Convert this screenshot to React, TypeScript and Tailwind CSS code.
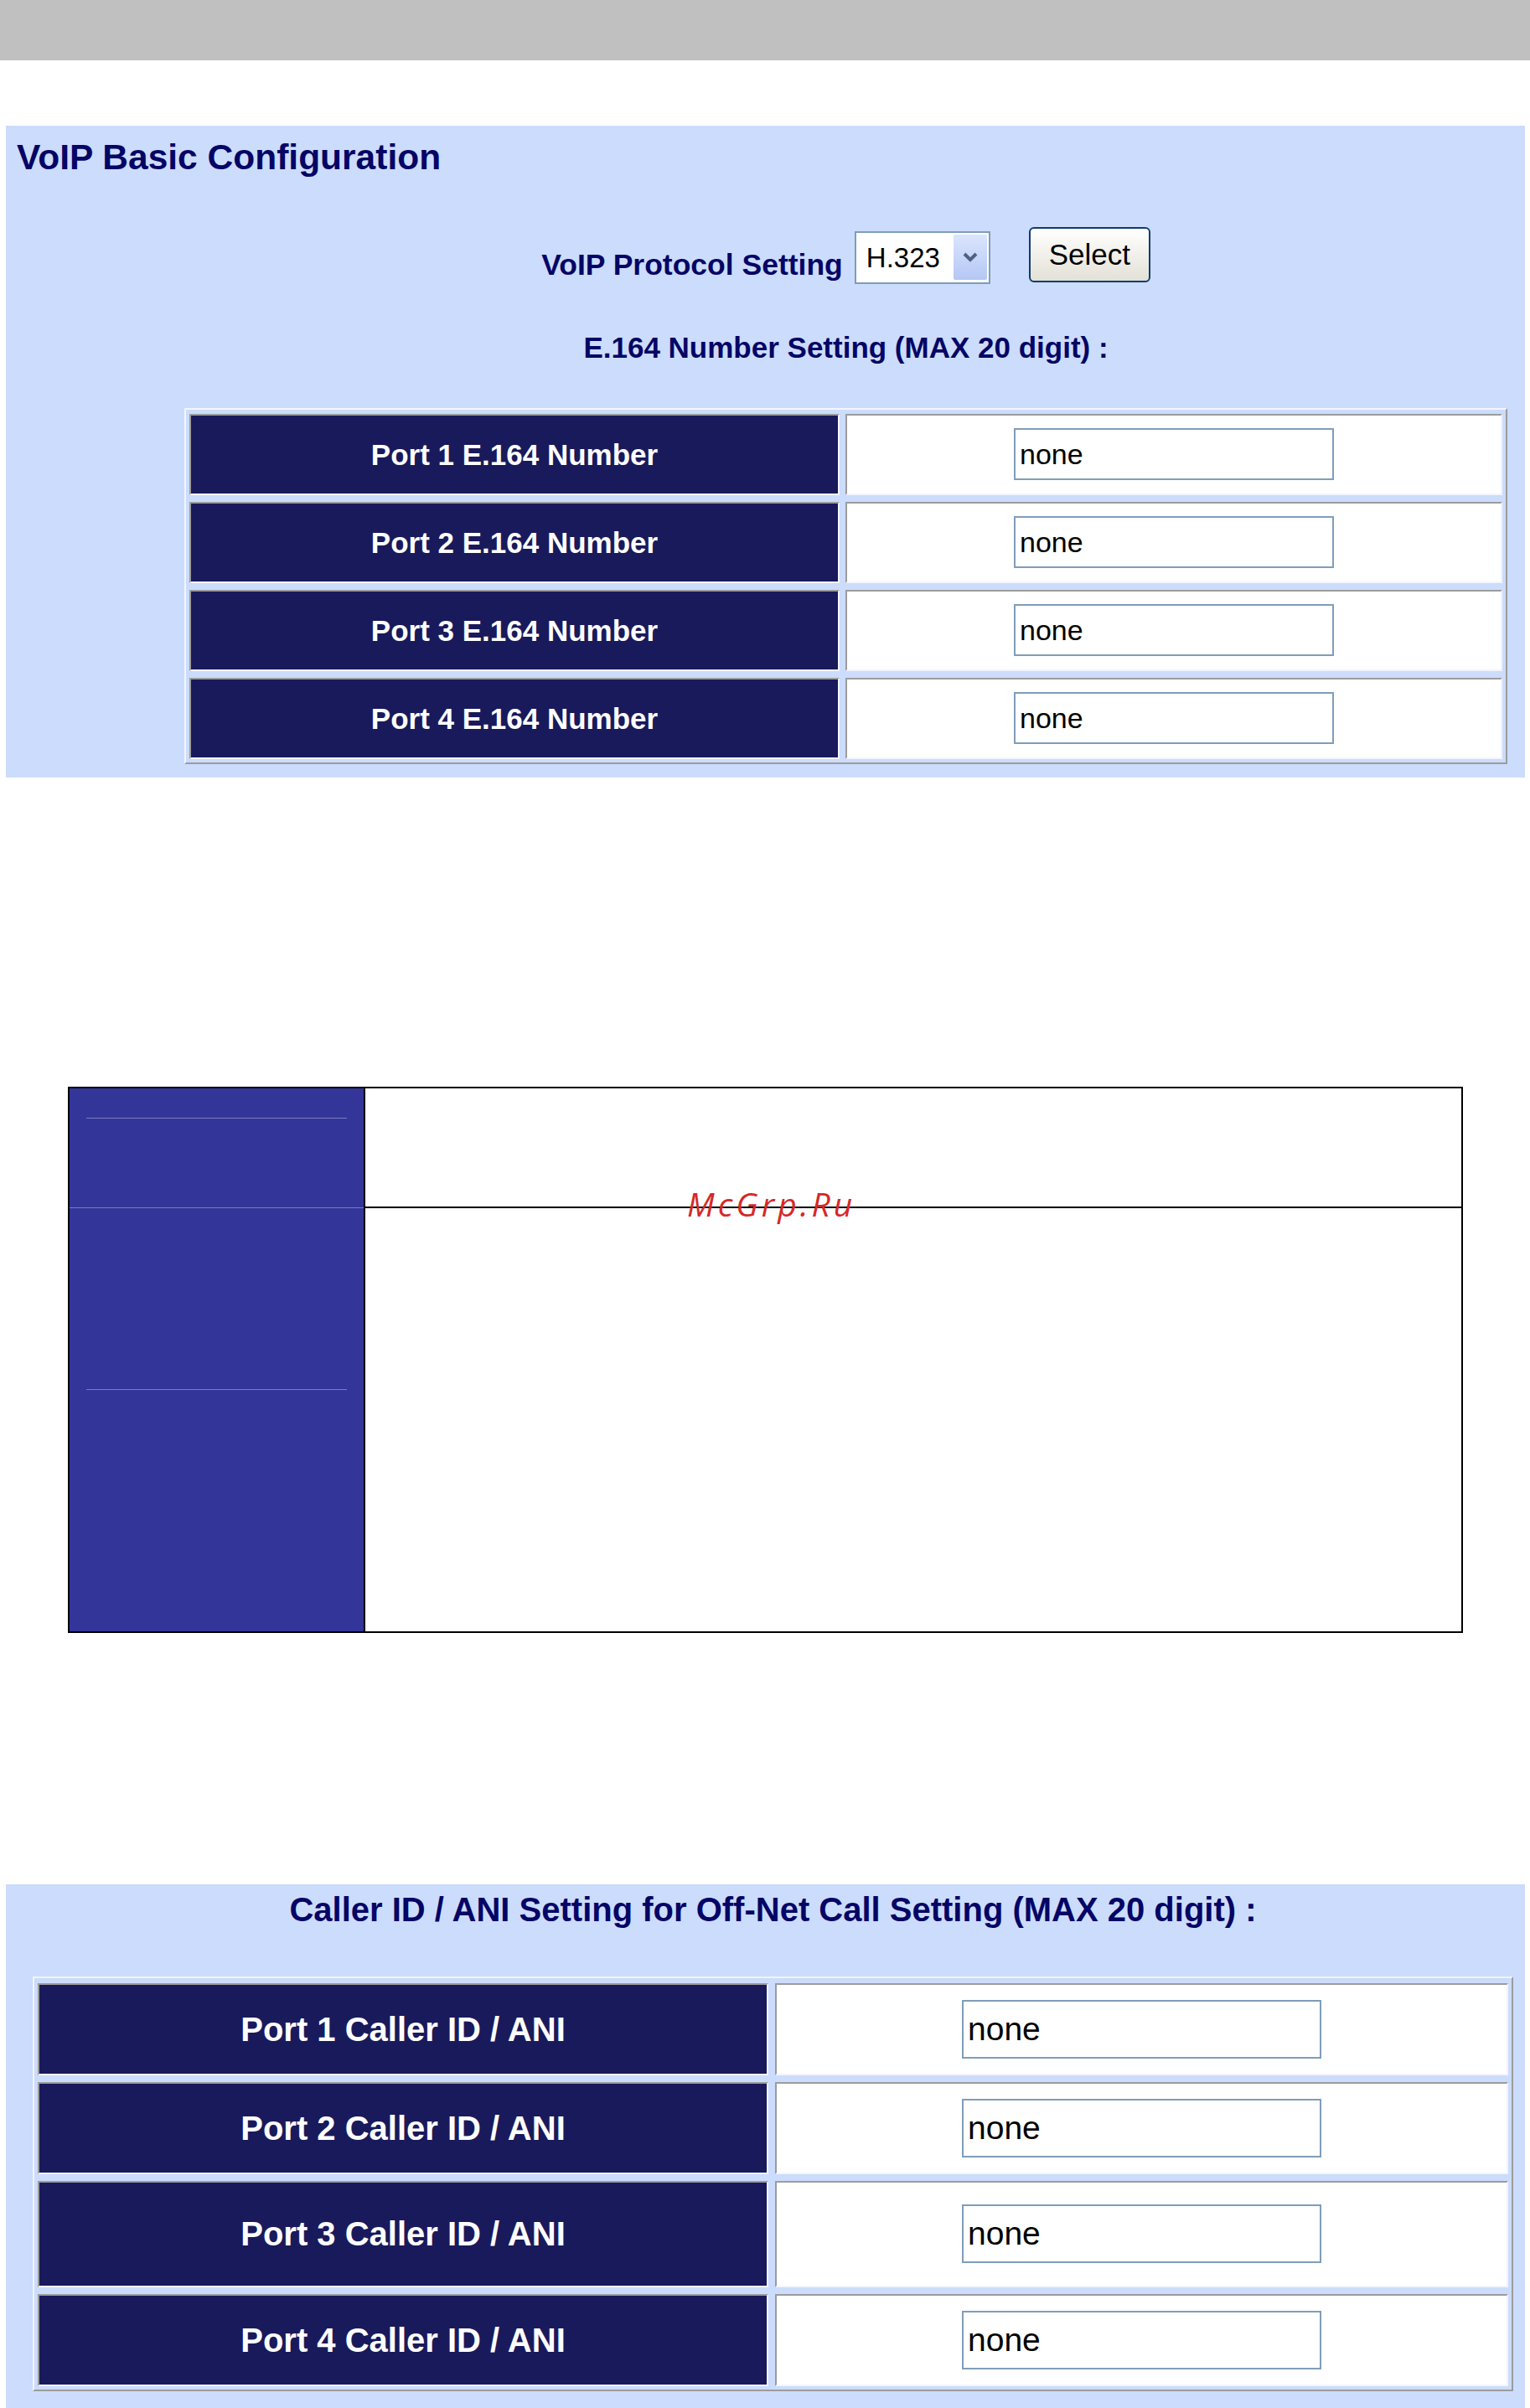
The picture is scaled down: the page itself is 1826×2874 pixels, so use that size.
import React from "react";

const e164Rows = ["Port 1 E.164 Number", "Port 2 E.164 Number", "Port 3 E.164 Number", "Port 4 E.164 Number"];
const callerRows = ["Port 1 Caller ID / ANI", "Port 2 Caller ID / ANI", "Port 3 Caller ID / ANI", "Port 4 Caller ID / ANI"];

function Cell({ children, dark }: { children: React.ReactNode; dark?: boolean }) {
  return (
    <div
      className={
        "flex items-center justify-center border-2 border-t-[#9c9c9c] border-l-[#9c9c9c] border-b-[#f2f5fd] border-r-[#f2f5fd] " +
        (dark ? "bg-[#191a5b] text-white font-bold" : "bg-white")
      }
    >
      {children}
    </div>
  );
}

function NoneInput({ big }: { big?: boolean }) {
  return (
    <input
      readOnly
      value="none"
      className={
        "border-2 border-[#7f9db9] bg-white text-black outline-none px-[5px] " +
        (big ? "w-[429px] h-[70px] text-[39px]" : "w-[382px] h-[62px] text-[34px]")
      }
    />
  );
}

export default function App() {
  return (
    <div className="w-[1826px] h-[2874px] overflow-hidden bg-white font-['Liberation_Sans',Arial,sans-serif]">
      <div className="h-[72px] bg-[#c0c0c0]" />

      {/* VoIP basic configuration panel */}
      <section className="mt-[78px] ml-[7px] w-[1813px] bg-[#ccdcfc] pt-[17px] pb-[16px]">
        <h1 className="pl-[13px] text-[42.5px] leading-none font-bold text-[#050566]">VoIP Basic Configuration</h1>
        <div className="ml-[213px] w-[1579px]">
          <div className="mt-[61px] flex items-start justify-center">
            <span className="mt-[28px] text-[35.5px] leading-none font-bold text-[#050566]">VoIP Protocol Setting</span>
            <div className="ml-[14px] mt-[5px] w-[162px] h-[63px] border-2 border-[#7f9db9] bg-white flex items-center">
              <span className="flex-1 pl-[12px] text-[33px] leading-none text-black">H.323</span>
              <div className="mr-[2px] w-[40px] h-[54px] rounded-[2px] bg-linear-to-b from-[#dbe5fd] to-[#b4c7f4] flex items-center justify-center">
                <svg width="20" height="14" viewBox="0 0 20 14">
                  <path d="M3 3 L10 10 L17 3" fill="none" stroke="#4d6185" strokeWidth="4" />
                </svg>
              </div>
            </div>
            <button className="ml-[46px] w-[145px] h-[66px] rounded-[6px] border-2 border-[#0f3c6c] bg-linear-to-b from-white to-[#e3e1d6] text-[35px] leading-none text-black flex items-center justify-center">
              Select
            </button>
          </div>
          <p className="mt-[58px] text-center text-[35px] leading-none font-bold text-[#050566]">
            E.164 Number Setting (MAX 20 digit) :
          </p>
          <div className="mt-[55px] border-2 border-t-[#f2f5fd] border-l-[#f2f5fd] border-b-[#9c9c9c] border-r-[#9c9c9c] px-[4px] pt-[5px] pb-[4px] grid grid-cols-[776px_784px] auto-rows-[97px] gap-x-[7px] gap-y-[8px]">
            {e164Rows.map((r) => (
              <React.Fragment key={r}>
                <Cell dark>
                  <span className="text-[35px] leading-none">{r}</span>
                </Cell>
                <Cell>
                  <NoneInput />
                </Cell>
              </React.Fragment>
            ))}
          </div>
        </div>
      </section>

      {/* empty two-row table */}
      <div className="relative mt-[369px] ml-[81px] w-[1665px] h-[652px] border-2 border-black flex">
        <div className="w-[353px] bg-[#343598] border-r-2 border-black flex flex-col">
          <div className="h-[143px] border-b border-[#7b7cc4] pt-[35px]">
            <div className="mx-[20px] h-px bg-[#7b7cc4]" />
          </div>
          <div className="pt-[216px]">
            <div className="mx-[20px] h-px bg-[#7b7cc4]" />
          </div>
        </div>
        <div className="flex-1 flex flex-col">
          <div className="h-[143px] border-b-2 border-black" />
          <div className="flex-1" />
        </div>
        <span className="absolute left-[737px] top-[118px] font-['Open_Sans','Noto_Sans',sans-serif] italic font-medium text-[39px] leading-none tracking-[4px] text-[#d62828]">
          McGrp.Ru
        </span>
      </div>

      {/* Caller ID panel */}
      <section className="mt-[300px] ml-[7px] w-[1813px] h-[625px] bg-[#ccdcfc] pt-[10px]">
        <div className="ml-[32px] w-[1767px]">
          <p className="text-center text-[40px] leading-none font-bold text-[#050566]">
            Caller ID / ANI Setting for Off-Net Call Setting (MAX 20 digit) :
          </p>
          <div className="mt-[60px] border-2 border-t-[#f2f5fd] border-l-[#f2f5fd] border-b-[#9c9c9c] border-r-[#9c9c9c] px-[4px] pt-[6px] pb-[4px] grid grid-cols-[872px_875px] grid-rows-[110px_110px_127px_110px] gap-x-[8px] gap-y-[8px]">
            {callerRows.map((r) => (
              <React.Fragment key={r}>
                <Cell dark>
                  <span className="text-[40px] leading-none">{r}</span>
                </Cell>
                <Cell>
                  <NoneInput big />
                </Cell>
              </React.Fragment>
            ))}
          </div>
        </div>
      </section>
    </div>
  );
}
